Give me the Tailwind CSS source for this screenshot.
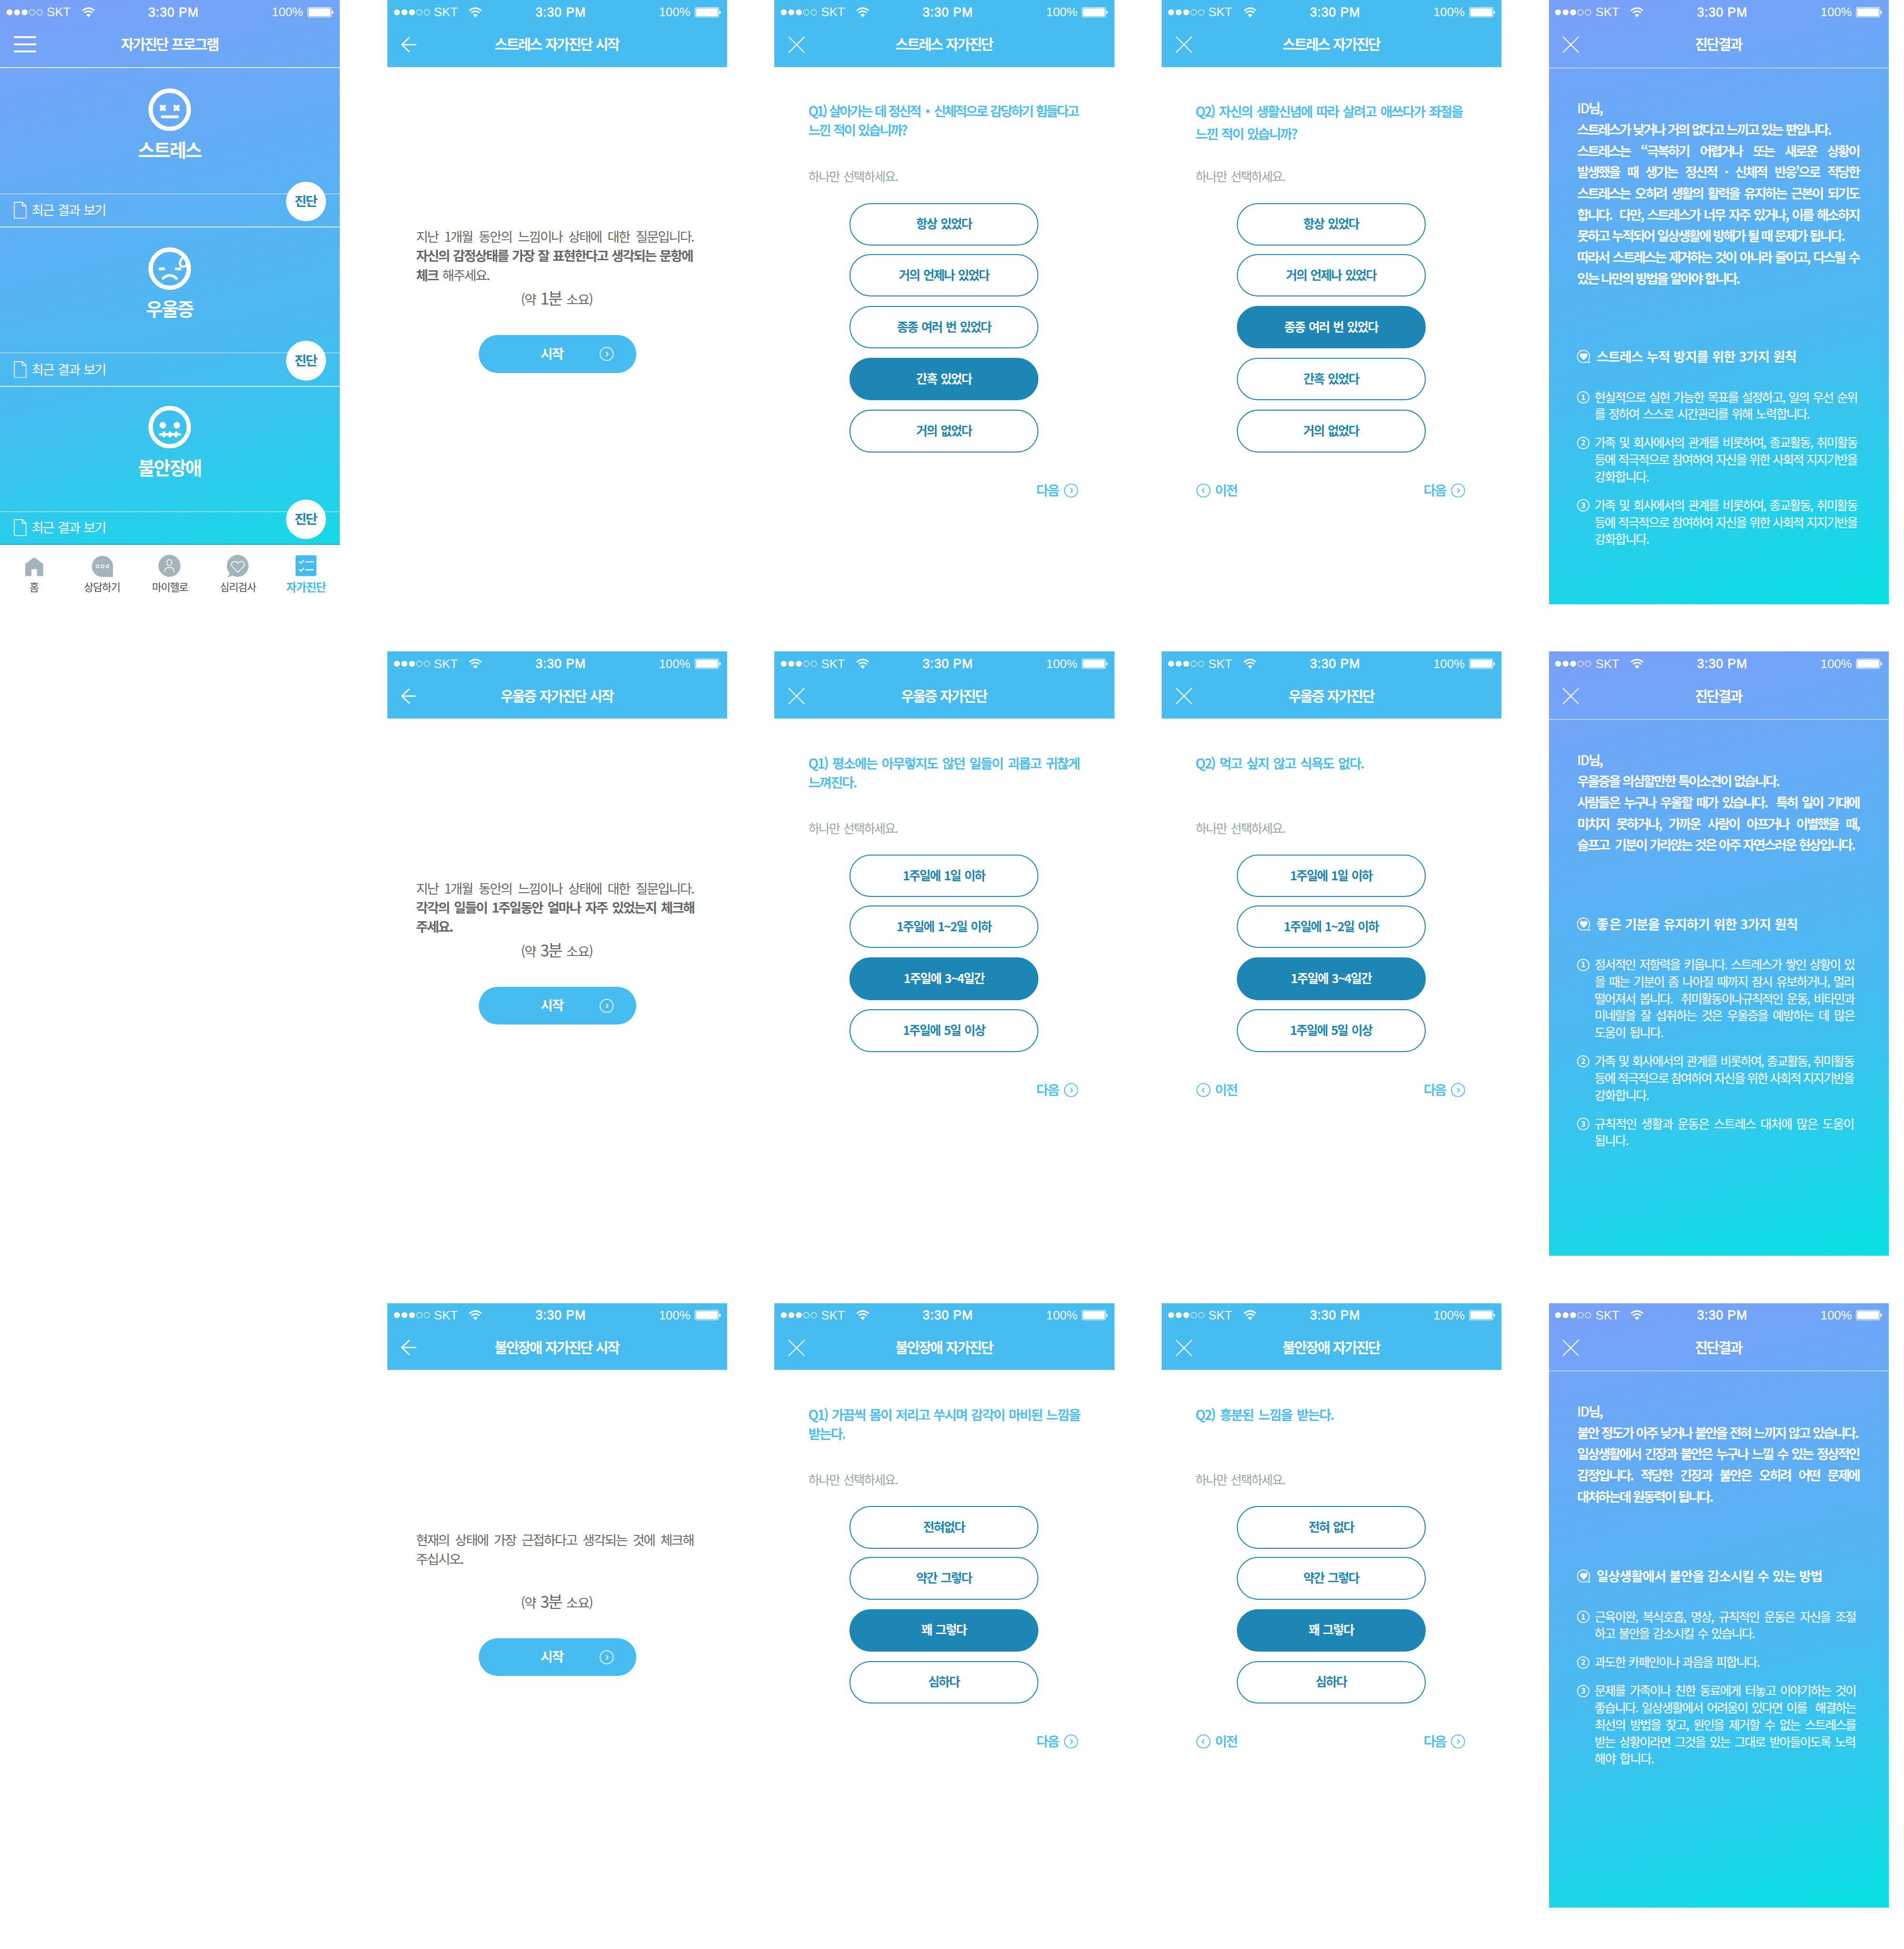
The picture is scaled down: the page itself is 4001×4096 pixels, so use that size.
<!DOCTYPE html>
<html lang="ko">
<head>
<meta charset="utf-8">
<title>자가진단 프로그램</title>
<script src="https://cdn.jsdelivr.net/npm/@tailwindcss/browser@4"></script>
</head>
<body class="bg-white overflow-hidden">

<svg class="hidden" xmlns="http://www.w3.org/2000/svg">
  <symbol id="dots" viewBox="0 0 80 16">
    <g fill="#fff"><circle cx="7" cy="8" r="6.3"/><circle cx="23" cy="8" r="6.3"/><circle cx="39" cy="8" r="6.3"/></g>
    <g fill="none" stroke="#fff" stroke-width="1.2"><circle cx="54.7" cy="8" r="5.9"/><circle cx="70.6" cy="8" r="5.9"/></g>
  </symbol>
  <symbol id="wifi" viewBox="0 0 28 22">
    <g fill="none" stroke="#fff" stroke-width="3"><path d="M1.2 7.6Q14 -3.4 26.8 7.6"/><path d="M5.4 12.2Q14 5 22.6 12.2"/></g>
    <path fill="#fff" d="M9 16.2Q14 12.2 19 16.2L14 21.6Z"/>
  </symbol>
  <symbol id="battery" viewBox="0 0 56 22">
    <rect x=".7" y=".7" width="50" height="20.6" rx="3.4" fill="none" stroke="#fff" stroke-width="1.2"/>
    <rect x="2.6" y="2.6" width="46.2" height="16.8" rx="1.8" fill="#fff"/>
    <path fill="#fff" d="M52 7.2Q55.2 8 55.2 11Q55.2 14 52 14.8Z"/>
  </symbol>
  <symbol id="menu" viewBox="0 0 48 35"><path fill="#fff" d="M0 0H48V4H0ZM0 15.3H48V19.3H0ZM0 30.6H48V34.6H0Z"/></symbol>
  <symbol id="back" viewBox="0 0 34 34"><path fill="none" stroke="#fff" stroke-width="2.8" d="M18.5 1.5L2.5 17L18.5 32.5M2.5 17H33"/></symbol>
  <symbol id="close" viewBox="0 0 36 36"><path fill="none" stroke="#fff" stroke-width="2.3" d="M1 1L35 35M35 1L1 35"/></symbol>
  <symbol id="next" viewBox="0 0 30 30"><circle cx="15" cy="15" r="13.9" fill="none" stroke="currentColor" stroke-width="1.9"/><path d="M13.6 10.6L17.8 15L13.6 19.4" fill="none" stroke="currentColor" stroke-width="2"/></symbol>
  <symbol id="prev" viewBox="0 0 30 30"><circle cx="15" cy="15" r="13.9" fill="none" stroke="currentColor" stroke-width="1.9"/><path d="M16.4 10.6L12.2 15L16.4 19.4" fill="none" stroke="currentColor" stroke-width="2"/></symbol>
  <symbol id="doc" viewBox="0 0 27 36"><path fill="none" stroke="#fff" stroke-width="1.8" stroke-linejoin="round" d="M1 1H18L26 9V35H1ZM18 1V9H26"/></symbol>
  <symbol id="stress" viewBox="0 0 90 90">
    <g fill="none" stroke="#fff" stroke-linecap="round"><circle cx="45" cy="45" r="40.4" stroke-width="9.2"/>
    <path stroke-width="6" d="M26.8 37.4L34 44.8M34 37.4L26.8 44.8M56 37.4L63.2 44.8M63.2 37.4L56 44.8M29 59.9H61.4"/></g>
  </symbol>
  <symbol id="gloom" viewBox="0 0 90 90">
    <g fill="none" stroke="#fff" stroke-linecap="round"><circle cx="45" cy="45" r="40.4" stroke-width="9.4"/>
    <path stroke-width="6" d="M24.4 45.4H32M59 45.4H66.6M31 65.4Q45 53 59.2 65.4"/>
    <path stroke-width="4.6" stroke-linejoin="round" d="M73.7 19C70 25.5 66.3 29.6 66.3 33.6C66.3 38 69.5 40.8 73.7 40.8C77.9 40.8 81.1 38 81.1 33.6C81.1 29.6 77.4 25.5 73.7 19Z"/></g>
  </symbol>
  <symbol id="anxious" viewBox="0 0 90 90">
    <g fill="none" stroke="#fff" stroke-linecap="round"><circle cx="45" cy="45" r="40.4" stroke-width="9.2"/>
    <path stroke-width="5.4" d="M25 60.5H66.5"/><path stroke-width="6" d="M32.7 57V64M45.5 57V64M58.6 57V64"/></g>
    <circle cx="30.4" cy="41" r="7" fill="#fff"/><circle cx="60" cy="41" r="7" fill="#fff"/>
  </symbol>
  <symbol id="heartq" viewBox="0 0 28 28">
    <path fill="none" stroke="#fff" stroke-width="1.9" stroke-linejoin="round" d="M24.3 21.6A13 13 0 1 0 20 25.6C22 26.8 24.5 27.3 27.2 26.9C25.6 25.2 24.4 23.6 24.3 21.6Z"/>
    <path fill="#fff" d="M14.1 22.4L7.3 15.2C5.5 13 5.6 10.1 7.4 8.5C9.4 6.7 12.4 7.1 14.1 9.6C15.8 7.1 18.8 6.7 20.8 8.5C22.6 10.1 22.7 13 20.9 15.2Z"/>
  </symbol>
  <symbol id="t-home" viewBox="0 0 48 50"><path fill="#a4b4bb" d="M24 6L43 20.2V46H30V31.4H18V46H5V20.2Z"/></symbol>
  <symbol id="t-chat" viewBox="0 0 48 50"><path fill="#a4b4bb" d="M24.4 3A22.4 22.4 0 0 0 24.4 47.8H46.8V25.4A22.4 22.4 0 0 0 24.4 3Z"/><g fill="none" stroke="#fff" stroke-width="1.6"><circle cx="14.3" cy="25.3" r="3.1"/><circle cx="24.6" cy="25.3" r="3.1"/><circle cx="34.9" cy="25.3" r="3.1"/></g></symbol>
  <symbol id="t-me" viewBox="0 0 48 50"><circle cx="23.3" cy="24.4" r="23.3" fill="#a4b4bb"/><g fill="none" stroke="#fff" stroke-width="1.7" stroke-linecap="round"><ellipse cx="22.9" cy="17.5" rx="5.3" ry="6.3"/><path d="M13.2 36.6C13.2 30.5 17 27.6 22.9 27.6C28.8 27.6 32.8 30.5 32.8 36.6"/></g></symbol>
  <symbol id="t-heart" viewBox="0 0 48 50"><path fill="#a4b4bb" d="M24 1A23.3 23.3 0 0 0 6.4 39.6C6.2 43 4.4 45 1 47.2C5 48.4 9 47.6 12 44.6A23.3 23.3 0 1 0 24 1Z"/><path fill="none" stroke="#fff" stroke-width="1.7" stroke-linejoin="round" d="M24 38L12.4 26.2C9.4 22.8 10 18.4 13 16.3C16.8 13.8 21.8 15.2 24 20C26.2 15.2 31.2 13.8 35 16.3C38 18.4 38.6 22.8 35.6 26.2Z"/></symbol>
  <symbol id="t-check" viewBox="0 0 48 50"><rect x="2" y="2" width="44.2" height="44" rx="4" fill="#45bcf0"/><path fill="none" stroke="#fff" stroke-width="2.4" stroke-linecap="round" d="M10.2 15.8L13.6 18.8L19.4 12.6M23.6 16H39.6M10.2 32.6L13.6 35.6L19.4 29.4M23.6 32.8H39.6"/></symbol>
</svg>

<main id="board" class="grid h-[4128px] w-[4032px] [zoom:0.99225] grid-cols-[repeat(5,720px)] auto-rows-[1280px] content-start gap-[100px] font-['Noto_Sans_CJK_KR',sans-serif]"></main>

<script>
const icon = (id, cls) => `<svg class="${cls}"><use href="#${id}"/></svg>`;

// A line of copy; `w` is the measure it is justified to, 0 keeps it ragged.
const line = (t, w) => w
  ? `<p class="whitespace-nowrap [text-align-last:justify] [word-spacing:0px]" style="width:${w}px">${t}</p>`
  : `<p class="whitespace-nowrap">${t}</p>`;
const lines = list => list.map(([t, w]) => line(t, w)).join('');

const statusBar = `
  <div class="flex h-[52px] shrink-0 items-center px-[13px] font-['Liberation_Sans',sans-serif] text-[26px] text-white">
    <div class="flex w-[301px] items-center">
      ${icon('dots', 'h-4 w-20')}
      <span class="ml-1.5 w-[74px]">SKT</span>
      ${icon('wifi', 'h-[22px] w-7')}
    </div>
    <span class="text-[27px] tracking-[0.9px] [-webkit-text-stroke:0.8px_#fff]">3:30 PM</span>
    <div class="ml-auto flex items-center gap-[9px]">
      <span>100%</span>
      ${icon('battery', 'h-[22px] w-14')}
    </div>
  </div>`;

const header = (title, btn, tone) => `
  <header class="shrink-0 ${tone}">
    ${statusBar}
    <div class="grid h-[90px] grid-cols-[100px_1fr_100px] items-center pb-[5px]">
      <div class="pl-[29px]">${btn}</div>
      <h1 class="pr-[2px] pb-[3px] text-center text-[30px] leading-10 font-bold tracking-[-2.8px] text-white [word-spacing:2px]">${title}</h1>
    </div>
  </header>`;
const btnMenu = icon('menu', 'h-[35px] w-12');
const btnBack = icon('back', 'h-[34px] w-[34px]');
const btnClose = icon('close', 'h-9 w-9');

const homeSection = (face, name, h, rowH) => `
  <section class="flex shrink-0 flex-col border-t-[2.1px] border-white/80 ${h}">
    <div class="flex flex-1 flex-col items-center justify-end pr-[2px] pb-16">
      ${icon(face, 'h-[90px] w-[90px]')}
      <h2 class="mt-[9px] text-[39px] leading-[60px] font-bold tracking-[-2.5px] text-white">${name}</h2>
    </div>
    <div class="relative flex items-center border-t border-white pl-[29px] ${rowH}">
      ${icon('doc', 'h-9 w-[27px]')}
      <span class="-mt-0.5 ml-[11px] text-[28px] leading-10 tracking-[-2.5px] text-white [word-spacing:3px]">최근 결과 보기</span>
      <button class="absolute -top-[26px] right-[30px] h-[84px] w-[84px] rounded-full bg-white pr-[2px] pb-[3px] text-[28px] font-bold tracking-[-2.4px] text-[#1c85b3]">진단</button>
    </div>
  </section>`;

const tab = (id, name, cls) => `
  <a class="flex flex-col items-center pt-5 ${cls}">${icon(id, 'h-[50px] w-12')}<span class="mt-1 leading-[30px]">${name}</span></a>`;

const home = `
  <article class="flex h-[1280px] flex-col bg-[linear-gradient(166deg,#7b9ff9_0%,#47bbf0_60%,#08e1e5_100%)]">
    ${header('자가진단 프로그램', btnMenu, '')}
    ${homeSection('stress', '스트레스', 'h-[338px]', 'h-[70px]')}
    ${homeSection('gloom', '우울증', 'h-[337px]', 'h-[70px]')}
    ${homeSection('anxious', '불안장애', 'h-[335px]', 'h-[69px]')}
    <nav class="grid flex-1 grid-cols-5 border-t-[2.1px] border-[#1aa9bb] bg-white text-[22px] tracking-[-1.2px] text-[#4d4d4d]">
      ${tab('t-home', '홈', '')}
      ${tab('t-chat', '상담하기', '')}
      ${tab('t-me', '마이헬로', '')}
      ${tab('t-heart', '심리검사', '')}
      ${tab('t-check', '자가진단', 'text-[24px] font-bold text-[#45bcf0]')}
    </nav>
  </article>`;

const start = (title, copy, min) => `
  <article class="col-start-2 flex h-[1280px] flex-col">
    ${header(title + ' 자가진단 시작', btnBack, 'bg-[#47bcf0]')}
    <div class="mt-[338px] ml-[61px] h-[121px] text-[28px] leading-[40.5px] tracking-[-2.3px] text-[#666] [word-spacing:3px]">${lines(copy)}</div>
    <p class="pr-[2px] text-center text-[28px] leading-[60px] tracking-[-1.7px] text-[#666] [word-spacing:3.6px]">(약 <span class="text-[34px] tracking-[-2.6px]">${min}분</span> 소요)</p>
    <button class="mt-[46px] ml-[194px] flex h-20 w-[333px] items-center rounded-full bg-[#47bcf0] pl-[131px] text-white">
      <span class="-mt-[3px] w-[125px] text-left text-[28px] font-bold tracking-[-2px]">시작</span>${icon('next', 'h-[30px] w-[30px]')}
    </button>
  </article>`;

const qTight = 'mt-[73px] h-[138px] leading-[40px] tracking-[-3.3px]';
const qWide = 'mt-[70px] h-[141px] leading-[47px] tracking-[-2.3px]';
const qNormal = 'mt-[73px] h-[138px] leading-[40.5px] tracking-[-2px]';

const question = (title, q, opts, sel, back, box) => `
  <article class="flex h-[1280px] flex-col">
    ${header(title + ' 자가진단', btnClose, 'bg-[#47bcf0]')}
    <div class="ml-[72px] text-[28px] font-medium text-[#47bcf0] [-webkit-text-stroke:0.5px_#47bcf0] [word-spacing:2px] ${box}">${lines(q)}</div>
    <p class="ml-[72px] text-[26px] leading-10 tracking-[-2px] text-[#94a4aa] [word-spacing:3px]">하나만 선택하세요.</p>
    <div class="mt-[37px] ml-[159px] flex w-[400px] flex-col gap-5">
      ${opts.map((o, i) => `<button class="h-[90px] rounded-full border-[2.1px] border-[#1d86b4] pb-[3px] text-[26px] font-bold tracking-[-2px] [word-spacing:2.6px] ${i === 0 ? '-mb-0.5' : ''} ${i === sel ? 'bg-[#1d86b4] text-white' : 'bg-white text-[#1d86b4]'}">${o}</button>`).join('')}
    </div>
    <div class="mt-[61px] flex h-10 items-center justify-between pr-[77px] pl-[74px] text-[28px] font-medium tracking-[-2.2px] text-[#47bcf0] [&_span]:[-webkit-text-stroke:0.3px_#47bcf0]">
      <a class="flex items-center gap-[9px]">${back ? icon('prev', 'h-[30px] w-[30px]') + '<span class="-mt-[3px]">이전</span>' : ''}</a>
      <a class="flex items-center gap-[11px]"><span class="-mt-[3px]">다음</span>${icon('next', 'h-[30px] w-[30px]')}</a>
    </div>
  </article>`;

const result = (body, head, items, gap) => `
  <article class="flex h-[1280px] flex-col bg-[linear-gradient(166deg,#7b9ff9_0%,#47bbf0_60%,#08e1e5_100%)] text-white">
    ${header('진단결과', btnClose, 'h-[145px] border-b-[2.1px] border-white/50')}
    <div class="mt-[61px] ml-[60px] text-[28px] leading-[45px] font-bold tracking-[-3.35px]">${lines(body)}</div>
    <div class="ml-[60px] flex h-10 items-center gap-[13px] ${gap}">
      ${icon('heartq', 'h-7 w-7')}
      <h2 class="text-[28px] leading-10 font-bold tracking-[-1.3px]">${lines([head])}</h2>
    </div>
    <ol class="mt-[47px] ml-[60px] flex flex-col gap-[24.5px] text-[26px] leading-9 tracking-[-2.4px] [-webkit-text-stroke:0.25px_#fff] [word-spacing:3.2px]">
      ${items.map((it, i) => `<li class="flex gap-[11px]"><span class="mt-[6.5px] flex h-[26px] w-[26px] shrink-0 items-center justify-center rounded-full border-[2.1px] border-white pb-px text-[16px] leading-none font-bold tracking-normal">${i + 1}</span><div>${lines(it)}</div></li>`).join('')}
    </ol>
  </article>`;

const freq = ['항상 있었다', '거의 언제나 있었다', '종종 여러 번 있었다', '간혹 있었다', '거의 없었다'];
const days = ['1주일에 1일 이하', '1주일에 1~2일 이하', '1주일에 3~4일간', '1주일에 5일 이상'];
const intro = ['지난 1개월 동안의 느낌이나 상태에 대한 질문입니다.', 588];
const greeting = ['<span class="font-medium tracking-[-2px]">ID</span>님,', 0];

document.getElementById('board').innerHTML = [
  home,
  start('스트레스', [intro, ['<b>자신의 감정상태를 가장 잘 표현한다고 생각되는 문항에</b>', 586], ['<b>체크</b> 해주세요.', 0]], 1),
  question('스트레스', [['Q1) 살아가는 데 정신적・신체적으로 감당하기 힘들다고', 571], ['<span class="tracking-[-2.9px]">느낀 적이 있습니까?</span>', 0]], freq, 3, false, qTight),
  question('스트레스', [['Q2) 자신의 생활신념에 따라 살려고 애쓰다가 좌절을', 565], ['느낀 적이 있습니까?', 0]], freq, 2, true, qWide),
  result([
    greeting, ['스트레스가 낮거나 거의 없다고 느끼고 있는 편입니다.', 536],
    ['스트레스는 “극복하기 어렵거나 또는 새로운 상황이', 597], ['발생했을 때 생기는 정신적 · 신체적 반응’으로 적당한', 597],
    ['스트레스는 오히려 생활의 활력을 유지하는 근본이 되기도', 597], ['합니다.&nbsp; 다만, 스트레스가 너무 자주 있거나, 이를 해소하지', 597],
    ['못하고 누적되어 일상생활에 방해가 될 때 문제가 됩니다.', 565], ['따라서 스트레스는 제거하는 것이 아니라 줄이고, 다스릴 수', 597],
    ['있는 나만의 방법을 알아야 합니다.', 343]],
    ['스트레스 누적 방지를 위한 3가지 원칙', 423],
    [[['현실적으로 실현 가능한 목표를 설정하고, 일의 우선 순위', 556], ['를 정하여 스스로 시간관리를 위해 노력합니다.', 454]],
     [['가족 및 회사에서의 관계를 비롯하여, 종교활동, 취미활동', 556], ['등에 적극적으로 참여하여 자신을 위한 사회적 지지기반을', 556], ['<span class="tracking-[-2.1px]">강화합니다.</span>', 0]],
     [['가족 및 회사에서의 관계를 비롯하여, 종교활동, 취미활동', 556], ['등에 적극적으로 참여하여 자신을 위한 사회적 지지기반을', 556], ['<span class="tracking-[-2.1px]">강화합니다.</span>', 0]]],
    'mt-[124px]'),

  start('우울증', [intro, ['<b>각각의 일들이 1주일동안 얼마나 자주 있었는지 체크해</b>', 589], ['<b>주세요.</b>', 0]], 3),
  question('우울증', [['Q1) 평소에는 아무렇지도 않던 일들이 괴롭고 귀찮게', 574], ['느껴진다.', 0]], days, 2, false, qNormal),
  question('우울증', [['Q2) 먹고 싶지 않고 식욕도 없다.', 356]], days, 2, true, qNormal),
  result([
    greeting, ['우울증을 의심할만한 특이소견이 없습니다.', 427],
    ['사람들은 누구나 우울할 때가 있습니다.&nbsp; 특히 일이 기대에', 597], ['미치지 못하거나, 가까운 사람이 아프거나 이별했을 때,', 597],
    ['슬프고&nbsp; 기분이 가라앉는 것은 아주 자연스러운 현상입니다.', 587]],
    ['<span class="tracking-[1.5px]">좋</span>은 기분을 유지하기 위한 3가지 원칙', 426],
    [[['정서적인 저항력을 키웁니다. 스트레스가 쌓인 상황이 있', 550], ['을 때는 기분이 좀 나아질 때까지 잠시 유보하거나, 멀리', 549], ['떨어져서 봅니다.&nbsp; 취미활동이나규칙적인 운동, 비타민과', 550], ['미네랄을 잘 섭취하는 것은 우울증을 예방하는 데 많은', 550], ['<span class="tracking-[-2.1px]">도움이 됩니다.</span>', 0]],
     [['가족 및 회사에서의 관계를 비롯하여, 종교활동, 취미활동', 549], ['등에 적극적으로 참여하여 자신을 위한 사회적 지지기반을', 549], ['<span class="tracking-[-2.1px]">강화합니다.</span>', 0]],
     [['<span class="tracking-[-1.7px]">규칙적인 생활과 운동은 스트레스 대처에 많은 도움이</span>', 549], ['<span class="tracking-[-2.1px]">됩니다.</span>', 0]]],
    'mt-[126px]'),

  start('불안장애', [['현재의 상태에 가장 근접하다고 생각되는 것에 체크해', 588], ['주십시오.', 0]], 3),
  question('불안장애', [['Q1) 가끔씩 몸이 저리고 쑤시며 감각이 마비된 느낌을', 575], ['받는다.', 0]], ['전혀없다', '약간 그렇다', '꽤 그렇다', '심하다'], 2, false, qNormal),
  question('불안장애', [['Q2) 흥분된 느낌을 받는다.', 292]], ['전혀 없다', '약간 그렇다', '꽤 그렇다', '심하다'], 2, true, qNormal),
  result([
    greeting, ['불안 정도가 아주 낮거나 불안을 전혀 느끼지 않고 있습니다.', 594],
    ['일상생활에서 긴장과 불안은 누구나 느낄 수 있는 정상적인', 597], ['감정입니다. 적당한 긴장과 불안은 오히려 어떤 문제에', 597],
    ['대처하는데 원동력이 됩니다.', 286]],
    ['일상생활에서 불안을 감소시킬 수 있는 방법', 478],
    [[['근육이완, 복식호흡, 명상, 규칙적인 운동은 자신을 조절', 553], ['하고 불안을 감소시킬 수 있습니다.', 338]],
     [['과도한 카페인이나 과음을 피합니다.', 348]],
     [['문제를 가족이나 친한 동료에게 터놓고 이야기하는 것이', 553], ['좋습니다. 일상생활에서 어려움이 있다면 이를&nbsp; 해결하는', 553], ['최선의 방법을 찾고, 원인을 제거할 수 없는 스트레스를', 553], ['받는 상황이라면 그것을 있는 그대로 받아들이도록 노력', 552], ['<span class="tracking-[-1.7px]">해야 합니다.</span>', 0]]],
    'mt-[127px]')
].join('');
</script>
</body>
</html>
